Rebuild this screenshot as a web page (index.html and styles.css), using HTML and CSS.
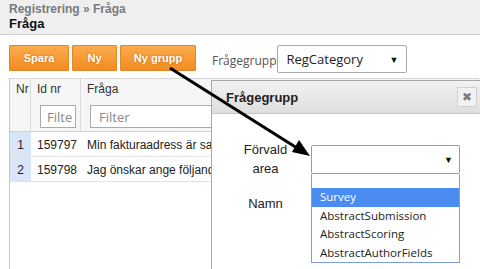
FILE: index.html
```html
<!DOCTYPE html>
<html>
<head>
<meta charset="utf-8">
<link rel="stylesheet" href="styles.css">
</head>
<body>
<div class="page">
  <header class="head">
    <div class="crumb">Registrering » Fråga</div>
    <div class="title">Fråga</div>
  </header>
  <div class="toolbar">
    <button class="btn">Spara</button>
    <button class="btn">Ny</button>
    <button class="btn">Ny grupp</button>
    <span class="lbl">Frågegrupp</span>
    <div class="sel sel-top"><span>RegCategory</span><span class="caret">▼</span></div>
  </div>
  <div class="grid">
    <div class="th c-nr">Nr</div>
    <div class="th c-id">Id nr<div class="filter f-id">Filte</div></div>
    <div class="th c-q">Fråga<div class="filter f-q">Filter</div></div>
    <div class="td c-nr nr">1</div>
    <div class="td c-id">159797</div>
    <div class="td c-q">Min fakturaadress är samma</div>
    <div class="td c-nr nr">2</div>
    <div class="td c-id">159798</div>
    <div class="td c-q">Jag önskar ange följande</div>
    <div class="fill"></div>
  </div>

  <div class="dialog">
    <div class="dlg-bar">
      <span class="dlg-title">Frågegrupp</span>
      <span class="close">✖</span>
    </div>
    <div class="dlg-body">
      <div class="row">
        <div class="flabel">Förvald<br>area</div>
        <div class="ddwrap">
          <div class="sel sel-dlg"><span></span><span class="caret">▼</span></div>
          <ul class="list">
            <li class="blank"></li>
            <li class="hi">Survey</li>
            <li>AbstractSubmission</li>
            <li>AbstractScoring</li>
            <li>AbstractAuthorFields</li>
          </ul>
        </div>
      </div>
      <div class="flabel namn">Namn</div>
    </div>
  </div>

  <svg class="arrow" width="480" height="269" viewBox="0 0 480 269">
    <line x1="170" y1="68" x2="297" y2="148" stroke="#000" stroke-width="3"/>
    <polygon points="310,156 292,152 299,140" fill="#000"/>
  </svg>
</div>
</body>
</html>
```
FILE: styles.css
```css
* { box-sizing: border-box; }
html, body { margin: 0; padding: 0; background: #fff; }
body { font-family: "Liberation Sans", Arial, sans-serif; }
.page { position: relative; width: 480px; height: 269px; overflow: hidden; }

.head {
  height: 35px;
  background: #efefef;
  border-bottom: 1px solid #cfcfcf;
  padding: 2px 9px 0;
}
.crumb { font-size: 12px; font-weight: bold; color: #7a7a7a; line-height: 14px; }
.title { font-size: 13px; font-weight: bold; color: #111; line-height: 16px; }

.toolbar {
  display: flex;
  align-items: center;
  padding: 10px 9px 0;
  height: 38px;
}
.btn {
  height: 26px;
  margin: 0 3px 0 0;
  padding: 0;
  border: 1px solid #e0862a;
  border-radius: 1px;
  background: linear-gradient(#fbab4c, #f28c20);
  color: #fff;
  font-family: "Liberation Sans", Arial, sans-serif;
  font-size: 11px;
  font-weight: bold;
  white-space: nowrap;
  text-shadow: 0 0 2px rgba(150, 70, 0, 0.6);
  align-self: flex-start;
}
.btn:nth-child(1) { width: 60px; }
.btn:nth-child(2) { width: 45px; }
.btn:nth-child(3) { width: 76px; }
.lbl {
  margin-left: 13px;
  font-family: "Open Sans", sans-serif;
  font-size: 12px;
  color: #555;
  margin-top: 3px;
}
.sel {
  display: flex;
  align-items: center;
  justify-content: space-between;
  background: #fff;
  border-radius: 2px;
  font-family: "Open Sans", sans-serif;
  font-size: 13px;
  color: #222;
}
.sel-top {
  margin-left: 1px;
  width: 130px;
  height: 28px;
  border: 1px solid #aaa;
  padding: 0 8px 0 8px;
  align-self: flex-start;
}
.caret { font-size: 9px; color: #111; }

.grid {
  margin: 5px 0 0 9px;
  width: 470px;
  height: 200px;
  display: grid;
  grid-template-columns: 21px 50px 1fr;
  grid-template-rows: 53px 25px 25px 1fr;
  border-left: 1px solid #c8c8c8;
  border-top: 1px solid #d6d6d6;
  font-size: 12px;
  color: #222;
}
.th {
  background: #f6f6f6;
  border-right: 1px solid #dcdcdc;
  border-bottom: 1px solid #d0d0d0;
  padding: 3px 0 0 6px;
  color: #333;
}
.filter {
  margin-top: 9px;
  height: 23px;
  border: 1px solid #aaa;
  background: #fff;
  font-family: "Open Sans", sans-serif;
  font-size: 13px;
  color: #888;
  padding: 2px 0 0 6px;
  overflow: hidden;
  white-space: nowrap;
}
.f-id { width: 36px; margin-left: 3px; }
.f-q { margin-left: 3px; width: 300px; padding-left: 8px; }
.td {
  border-bottom: 1px solid #e2e2e2;
  padding: 6px 0 0 6px;
  white-space: nowrap;
  overflow: hidden;
}
.nr { background: #d9e6f7; padding-left: 0; text-align: center; }
.fill { grid-column: 1 / 4; }

.dialog {
  position: absolute;
  left: 211px;
  top: 80px;
  width: 280px;
  height: 200px;
  background: #fff;
  border: 1px solid #a8a8a8;
}
.dlg-bar {
  height: 33px;
  background: linear-gradient(#f2f2f2, #dedede);
  border-bottom: 1px solid #c4c4c4;
  display: flex;
  align-items: center;
  padding-left: 14px;
}
.dlg-title { font-size: 13px; font-weight: bold; color: #222; }
.close {
  position: absolute;
  left: 245px;
  top: 6px;
  width: 20px;
  height: 20px;
  border: 1px solid #d0d0d0;
  background: #f1f1f1;
  color: #7a7a7a;
  font-size: 12px;
  display: flex;
  align-items: center;
  justify-content: center;
}
.dlg-body { padding: 31px 0 0 0; }
.row { display: flex; }
.flabel {
  width: 99px;
  text-align: center;
  font-size: 13px;
  line-height: 19px;
  color: #222;
  padding-left: 8px;
}
.row .flabel { margin-top: -5px; }
.ddwrap { width: 149px; }
.sel-dlg {
  height: 29px;
  border: 1px solid #7d9ee2;
  padding: 0 6px 0 8px;
}
.list {
  list-style: none;
  margin: 0;
  padding: 0;
  border: 1px solid #7d9ee2;
  border-top: none;
  background: #fff;
  font-family: "Open Sans", sans-serif;
  font-size: 11.5px;
  color: #222;
}
.list li { height: 18.5px; line-height: 18.5px; padding-left: 8px; }
.list li.blank { height: 14px; }
.list li.hi { background: #4a8cf2; color: #fff; }
.namn { position: absolute; left: 0; top: 113px; }

.arrow { position: absolute; left: 0; top: 0; pointer-events: none; }
```
